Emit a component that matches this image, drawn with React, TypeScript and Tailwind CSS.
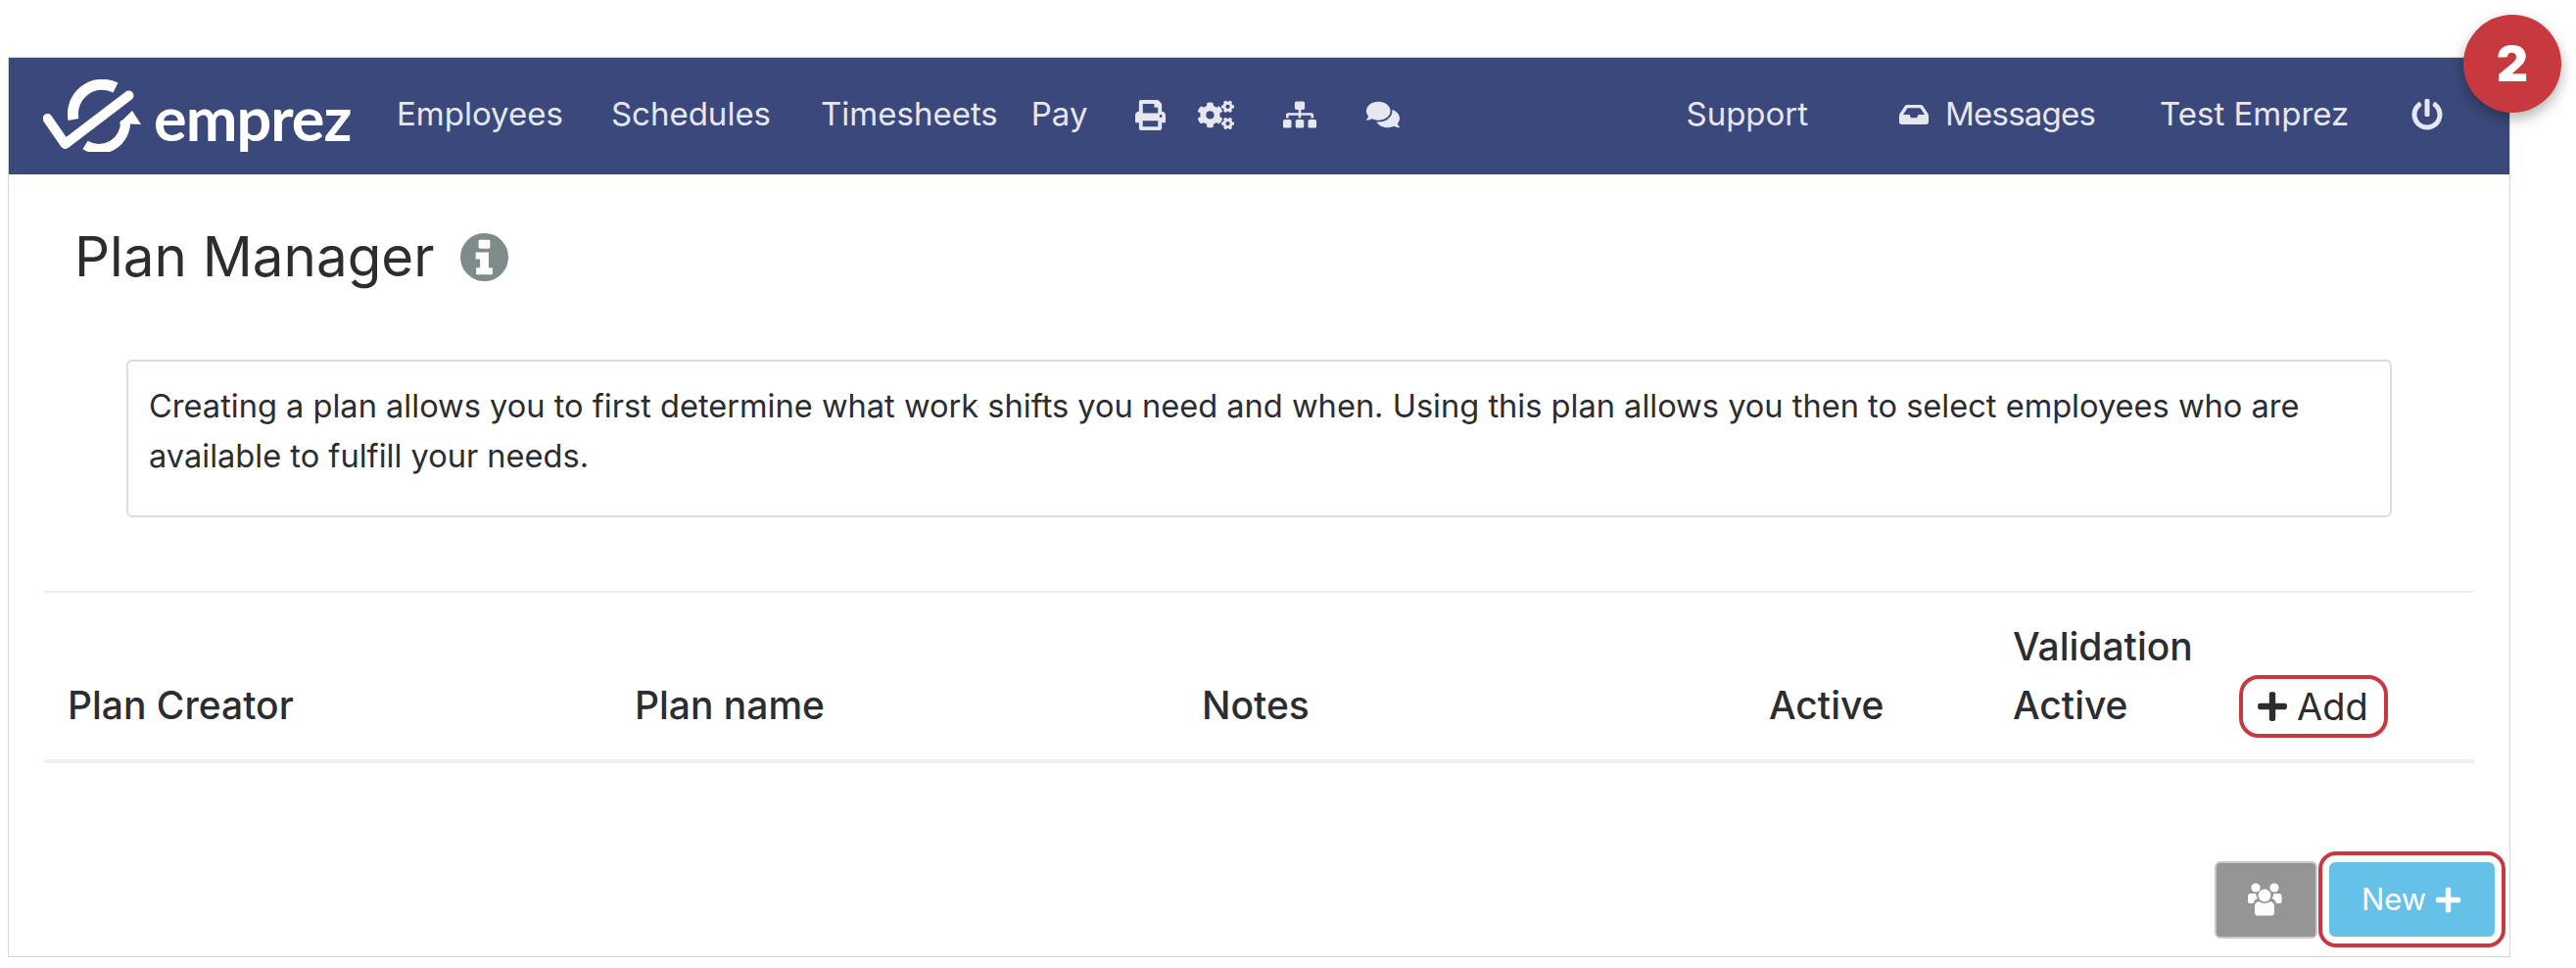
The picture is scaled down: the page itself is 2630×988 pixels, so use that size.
import { FaCogs, FaComments, FaInbox, FaPlus, FaPowerOff, FaPrint, FaSitemap } from "react-icons/fa";

function Logo() {
  return (
    <div className="mt-[2px] flex items-center">
      <svg width="100" height="74" viewBox="0 0 100 74" fill="none" className="shrink-0">
        <path d="M4.5 40 L22.5 66 L87.5 16.5" stroke="white" strokeWidth="10" strokeLinecap="round" strokeLinejoin="round" />
        <path d="M31 41 A30 30 0 0 1 74 8.5" stroke="white" strokeWidth="11" />
        <path d="M43 67 A27 27 0 0 0 84 42" stroke="white" strokeWidth="10" />
        <path d="M91 32 L100 46 L77.5 45 Z" fill="white" />
      </svg>
      <span className="ml-[13px] mt-[2px] w-[198px] text-[63px] leading-none font-bold tracking-[-1px] text-white font-['Lato',sans-serif]">emprez</span>
    </div>
  );
}

function InfoIcon() {
  return (
    <svg width="49" height="49" viewBox="0 0 50 50" className="ml-[26px] shrink-0">
      <circle cx="25" cy="25" r="25" fill="#7f8a8a" />
      <rect x="19" y="7" width="12" height="9" rx="1.5" fill="white" />
      <path d="M16 20 H29.5 V36 H33.5 V43 H16.5 V36 H20.5 V27 H16 Z" fill="white" />
    </svg>
  );
}

function UsersIcon() {
  return (
    <svg width="36" height="34" viewBox="0 0 36 34" fill="white" className="-ml-[3px]">
      <circle cx="9" cy="5" r="4.6" />
      <circle cx="28" cy="5" r="4.6" />
      <circle cx="18" cy="13" r="6.4" />
      <path d="M1 14 Q1 11 4 11 H9 Q9.5 14 11 16 Q7.5 17 6.5 21 H2.5 Q1 21 1 19 Z" />
      <path d="M35.5 14 Q35.5 11 32.5 11 H27.5 Q27 14 25.5 16 Q29 17 30 21 H34 Q35.5 21 35.5 19 Z" />
      <path d="M8 24 Q8 20 12 19 Q18 23 24 19 Q28 20 28 24 V30 Q28 33.5 25 33.5 H11 Q8 33.5 8 30 Z" />
    </svg>
  );
}

function Header() {
  return (
    <nav className="flex h-[119px] items-center bg-[#3b487b] pb-[3px] pl-[35px] text-[33px] text-[#e6e7f1]">
      <Logo />
      <a className="ml-[50px]">Employees</a>
      <a className="ml-[49px]">Schedules</a>
      <a className="ml-[51px]">Timesheets</a>
      <a className="ml-[34px]">Pay</a>
      <FaPrint className="ml-[49px] text-[31px]" />
      <FaCogs className="ml-[33px] text-[37px]" />
      <FaSitemap className="ml-[50px] text-[34px]" />
      <FaComments className="ml-[51px] text-[34px]" />
      <a className="ml-[292px]">Support</a>
      <FaInbox className="ml-[93px] text-[30px]" />
      <a className="ml-[17px] tracking-[-0.8px]">Messages</a>
      <a className="ml-[66px]">Test Emprez</a>
      <FaPowerOff className="ml-[64px] text-[32px]" />
    </nav>
  );
}

function PlanTable() {
  return (
    <div className="mx-[36px] mt-[75px] border-t-2 border-[#eceef0]">
      <div className="grid grid-cols-[579px_579px_579px_249px_248px_1fr] items-end border-b-4 border-[#eef0f2] px-6 pb-[25px] pt-[25px] text-[39px] font-medium leading-[60px] text-[#2b2d30]">
        <div>Plan Creator</div>
        <div>Plan name</div>
        <div>Notes</div>
        <div>Active</div>
        <div>
          Validation
          <br />
          Active
        </div>
        <div>
          <button className="-mb-[3px] -ml-[17px] flex h-[64px] w-[152px] items-center justify-center gap-[8px] rounded-[20px] border-[4px] border-[#c8393f] pr-[3px] text-[38px] font-normal">
            <FaPlus className="text-[34px]" />
            Add
          </button>
        </div>
      </div>
    </div>
  );
}

export default function App() {
  return (
    <div className="relative h-[988px] bg-white font-['Inter',sans-serif]">
      <div className="absolute left-[8px] top-[58px] flex h-[919px] w-[2555px] flex-col border border-[#d6d6d6]">
        <Header />
        <div className="flex items-center pl-[67px] pt-[49px]">
          <h1 className="text-[56.5px] leading-[70px] text-[#2b2d30]">Plan Manager</h1>
          <InfoIcon />
        </div>
        <div className="mx-[120px] mt-[70px] h-[161px] rounded-[6px] border-2 border-[#dcdcdc] px-[21px] pt-[20px] text-[32.6px] leading-[51px] text-[#2b2d30]">
          Creating a plan allows you to first determine what work shifts you need and when. Using this plan allows you then to select employees who are available to fulfill your needs.
        </div>
        <PlanTable />
        <div className="mt-[90px] flex items-center justify-end pr-[4px]">
          <button className="flex h-[79px] w-[105px] items-center justify-center rounded-[6px] border-2 border-[#c9c9c9] bg-[#959595]">
            <UsersIcon />
          </button>
          <div className="ml-[1px] rounded-[18px] border-[4px] border-[#c8393f] p-[7px]">
            <button className="flex h-[76px] w-[169px] items-center justify-center gap-[8px] rounded-[6px] bg-[#65c1e8] text-[31px] text-white">
              New
              <FaPlus className="text-[29px]" />
            </button>
          </div>
        </div>
      </div>
      <div className="absolute left-[2515px] top-[15px] flex h-[100px] w-[100px] items-center justify-center rounded-full bg-[#c8393f] text-[50px] font-black text-white shadow-[0_6px_14px_rgba(0,0,0,0.3)]">
        2
      </div>
    </div>
  );
}
